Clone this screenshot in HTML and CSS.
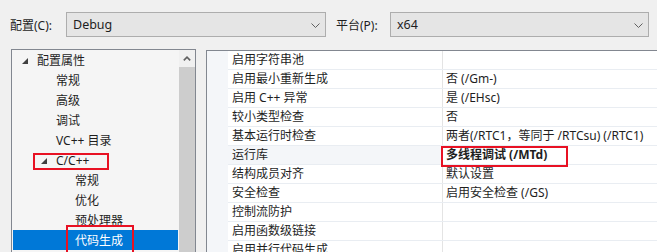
FILE: index.html
```html
<!DOCTYPE html>
<html>
<head>
    <title>属性页 - 代码生成</title>
    <link rel="stylesheet" href="styles.css">
</head>
<body>
    <div class="toolbar">
        <span class="field-label cfg-label">配置(C):</span>
        <div class="combo cfg-combo">
            <span>Debug</span>
            <svg class="chevron" width="9" height="5" viewBox="0 0 9 5"><polyline points="0.5,0.5 4.5,4.5 8.5,0.5" fill="none" stroke="#606060" stroke-width="1"/></svg>
        </div>
        <span class="field-label plat-label">平台(P):</span>
        <div class="combo plat-combo">
            <span>x64</span>
            <svg class="chevron" width="9" height="5" viewBox="0 0 9 5"><polyline points="0.5,0.5 4.5,4.5 8.5,0.5" fill="none" stroke="#606060" stroke-width="1"/></svg>
        </div>
    </div>

    <div class="main">
        <div class="tree">
            <ul class="tree-list">
                <li class="tree-row lvl0"><span class="toggle"><i class="tri"></i></span>配置属性</li>
                <li class="tree-row lvl1"><span class="toggle"></span>常规</li>
                <li class="tree-row lvl1"><span class="toggle"></span>高级</li>
                <li class="tree-row lvl1"><span class="toggle"></span>调试</li>
                <li class="tree-row lvl1"><span class="toggle"></span>VC++ 目录</li>
                <li class="tree-row lvl1"><span class="toggle"><i class="tri"></i></span>C/C++<span class="mark mark-cpp"></span></li>
                <li class="tree-row lvl2"><span class="toggle"></span>常规</li>
                <li class="tree-row lvl2"><span class="toggle"></span>优化</li>
                <li class="tree-row lvl2"><span class="toggle"></span>预处理器</li>
                <li class="tree-row lvl2 selected"><span class="toggle"></span>代码生成<span class="mark mark-codegen"></span></li>
            </ul>
            <div class="scrollbar">
                <div class="scroll-btn">
                    <svg width="8" height="5" viewBox="0 0 8 5"><polyline points="0.8,4.4 4,1.2 7.2,4.4" fill="none" stroke="#606060" stroke-width="1.6"/></svg>
                </div>
                <div class="scroll-thumb"></div>
            </div>
        </div>

        <div class="grid">
            <div class="gutter"></div>
            <div class="rows">
                <div class="prop-row"><div class="prop-name">启用字符串池</div><div class="prop-value"></div></div>
                <div class="prop-row"><div class="prop-name">启用最小重新生成</div><div class="prop-value">否 (/Gm-)</div></div>
                <div class="prop-row"><div class="prop-name">启用 C++ 异常</div><div class="prop-value">是 (/EHsc)</div></div>
                <div class="prop-row"><div class="prop-name">较小类型检查</div><div class="prop-value">否</div></div>
                <div class="prop-row"><div class="prop-name">基本运行时检查</div><div class="prop-value">两者(/RTC1，等同于 /RTCsu) (/RTC1)</div></div>
                <div class="prop-row current"><div class="prop-name">运行库</div><div class="prop-value bold">多线程调试 (/MTd)<span class="mark mark-value"></span></div></div>
                <div class="prop-row"><div class="prop-name">结构成员对齐</div><div class="prop-value">默认设置</div></div>
                <div class="prop-row"><div class="prop-name">安全检查</div><div class="prop-value">启用安全检查 (/GS)</div></div>
                <div class="prop-row"><div class="prop-name">控制流防护</div><div class="prop-value"></div></div>
                <div class="prop-row"><div class="prop-name">启用函数级链接</div><div class="prop-value"></div></div>
                <div class="prop-row"><div class="prop-name">启用并行代码生成</div><div class="prop-value"></div></div>
            </div>
        </div>
    </div>
</body>
</html>
```

FILE: styles.css
```css
html, body {
    margin: 0;
    padding: 0;
}
body {
    width: 657px;
    height: 252px;
    overflow: hidden;
    background-color: #f0f0f0;
    color: #1e1e1e;
    font-family: "Noto Sans", "Noto Sans CJK SC", sans-serif;
    font-size: 12px;
}
.toolbar {
    display: flex;
    align-items: center;
    height: 49px;
    box-sizing: border-box;
    padding: 12px 0 12px 10px;
}
.field-label {
    white-space: nowrap;
}
.cfg-label {
    width: 56px;
}
.plat-label {
    width: 54px;
    margin-left: 10px;
}
.combo {
    display: flex;
    align-items: center;
    justify-content: space-between;
    height: 25px;
    box-sizing: border-box;
    padding: 0 5px 0 6px;
    background-color: #e5e5e5;
    border: 1px solid #adadad;
    font-size: 12.5px;
}
.cfg-combo {
    width: 260px;
}
.plat-combo {
    width: 259px;
}
.chevron {
    display: block;
    margin-top: 1px;
}
.main {
    display: flex;
    align-items: flex-start;
    padding-left: 11px;
    height: 203px;
    overflow: hidden;
}
.tree {
    display: flex;
    width: 185px;
    height: 203px;
    box-sizing: border-box;
    border: 1px solid #828790;
    border-bottom: none;
    background-color: #f5f5f5;
    overflow: hidden;
}
.tree-list {
    flex: 1;
    margin: 0;
    padding: 0;
    list-style: none;
}
.tree-row {
    position: relative;
    display: flex;
    align-items: center;
    height: 20px;
    margin-right: 1px;
    white-space: nowrap;
}
.lvl0 { padding-left: 10px; }
.lvl1 { padding-left: 29px; }
.lvl2 { padding-left: 48px; }
.toggle {
    display: flex;
    align-items: center;
    width: 15px;
    height: 20px;
}
.tri {
    width: 0;
    height: 0;
    border-left: 6px solid transparent;
    border-bottom: 6px solid #404040;
    margin-top: 1px;
}
.tree-row.selected {
    background-color: #0078d7;
    color: white;
    margin-left: 1px;
    padding-left: 47px;
}
.scrollbar {
    width: 16px;
    display: flex;
    flex-direction: column;
}
.scroll-btn {
    height: 17px;
    display: flex;
    align-items: center;
    justify-content: center;
    background-color: #f0f0f0;
}
.scroll-thumb {
    flex: 1;
    background-color: #cdcdcd;
}
.grid {
    display: flex;
    flex: 1;
    height: 202px;
    margin-left: 10px;
    margin-top: 1px;
    box-sizing: border-box;
    border: 1px solid #828790;
    border-right: none;
    border-bottom: none;
    background-color: white;
    overflow: hidden;
}
.gutter {
    width: 21px;
    background-color: #f4f6f9;
}
.rows {
    flex: 1;
}
.prop-row {
    display: grid;
    grid-template-columns: 215px 1fr;
    height: 19px;
    box-sizing: border-box;
    border-bottom: 1px solid #e9edf2;
}
.prop-name {
    padding-left: 4px;
    line-height: 18px;
    border-right: 1px solid #e4e4e4;
    white-space: nowrap;
}
.prop-value {
    position: relative;
    padding-left: 3px;
    line-height: 18px;
    white-space: nowrap;
}
.prop-row.current .prop-name {
    background-color: #f4f6f9;
}
.bold {
    font-weight: bold;
}
.mark {
    position: absolute;
    box-sizing: border-box;
    border: 2px solid #e81123;
}
.mark-cpp {
    left: 21px;
    top: 3px;
    width: 76px;
    height: 17px;
}
.mark-codegen {
    left: 53px;
    top: -5px;
    width: 68px;
    height: 32px;
}
.mark-value {
    left: -2px;
    top: 0;
    width: 127px;
    height: 21px;
}
```
